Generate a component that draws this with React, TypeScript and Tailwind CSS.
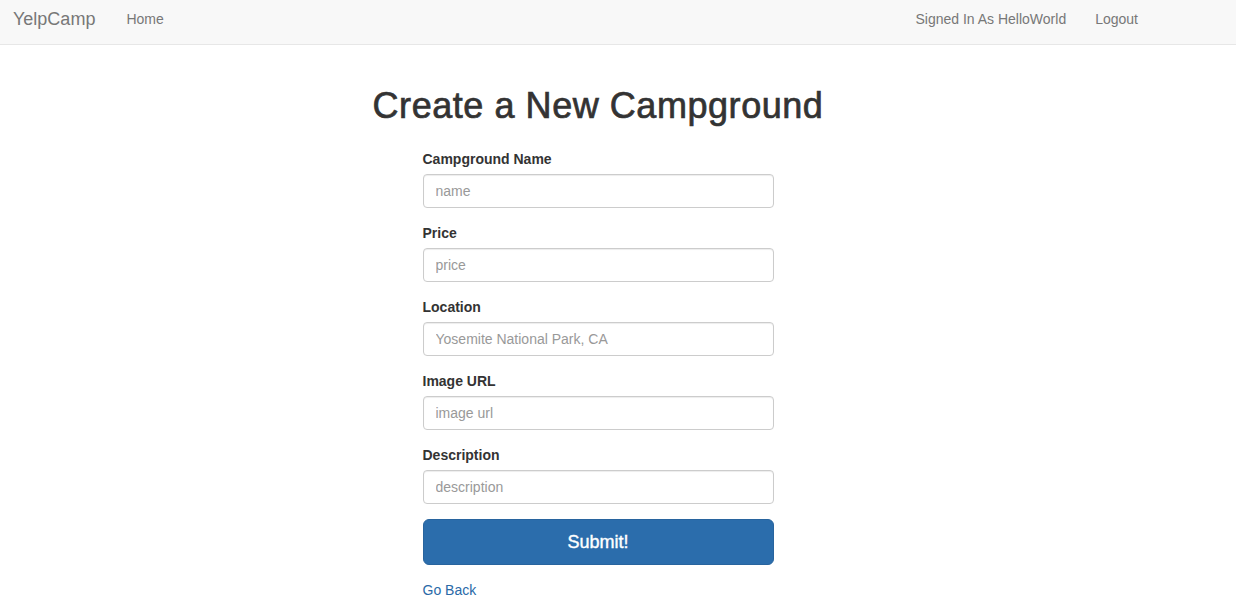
import React from "react";

const fields = [
  { label: "Campground Name", placeholder: "name" },
  { label: "Price", placeholder: "price" },
  { label: "Location", placeholder: "Yosemite National Park, CA" },
  { label: "Image URL", placeholder: "image url" },
  { label: "Description", placeholder: "description" },
];

const App = () => {
  return (
    <div className="min-h-[615px] bg-white text-[14px] text-[#333] font-['Liberation_Sans',Arial,sans-serif]">
      {/* Navbar */}
      <nav className="h-[45px] pb-[6px] bg-[#f8f8f8] border-b border-[#e7e7e7] flex items-center justify-between">
        <div className="flex items-center">
          <a className="pl-[13px] text-[18px] text-[#777] leading-[20px]">YelpCamp</a>
          <a className="ml-[31px] text-[#777] leading-[20px]">Home</a>
        </div>
        <div className="flex items-center pr-[98px]">
          <a className="text-[#777] leading-[20px]">Signed In As HelloWorld</a>
          <a className="ml-[29px] text-[#777] leading-[20px]">Logout</a>
        </div>
      </nav>

      {/* Content */}
      <div className="w-[1196px] flex flex-col items-center">
        <h1 className="mt-[41px] text-[36px] leading-[40px] text-[#333] tracking-[0.55px] [-webkit-text-stroke:0.7px_#333]">
          Create a New Campground
        </h1>
        <form className="w-[351px] mt-[23px]" onSubmit={(e) => e.preventDefault()}>
          {fields.map((f) => (
            <div key={f.label} className="mb-[15px]">
              <label className="block font-bold leading-[20px] mb-[5px] text-[#333]">{f.label}</label>
              <input
                type="text"
                placeholder={f.placeholder}
                className="block w-full h-[34px] px-[12px] border border-[#ccc] rounded-[4px] shadow-[inset_0_1px_1px_rgba(0,0,0,0.075)] text-[14px] text-[#555] placeholder:text-[#999] outline-none"
              />
            </div>
          ))}
          <button
            type="submit"
            className="block w-full h-[46px] mt-[15px] bg-[#2b6dac] border border-[#28649e] rounded-[6px] text-white text-[18px] leading-[24px] [-webkit-text-stroke:0.4px_#fff]"
          >
            Submit!
          </button>
          <a className="block mt-[15px] text-[#2a6aa8] leading-[20px]">Go Back</a>
        </form>
      </div>
    </div>
  );
};

export default App;
